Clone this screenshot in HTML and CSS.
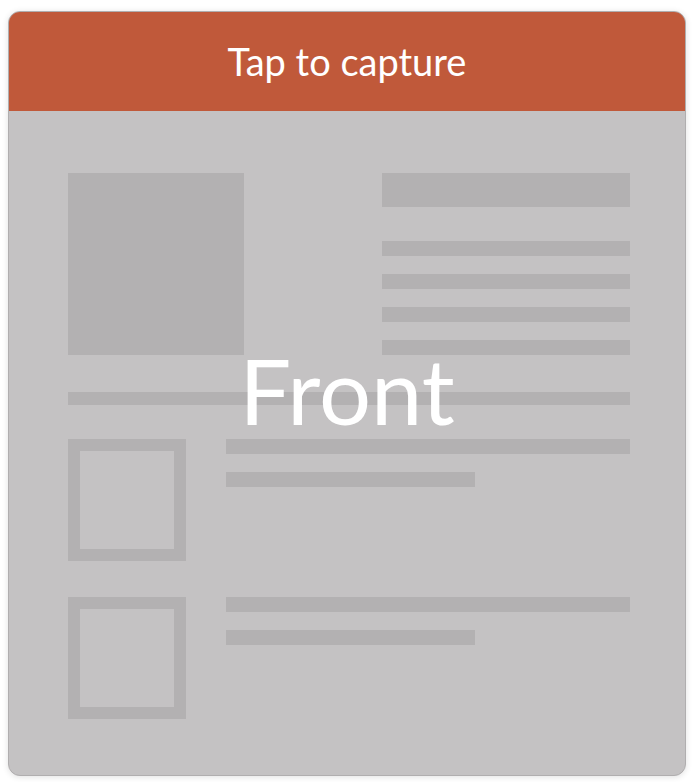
FILE: index.html
```html
<!DOCTYPE html>
<html lang="en">
<head>
    <meta charset="UTF-8">
    <meta name="viewport" content="width=device-width, initial-scale=1.0">
    <title>Capture</title>
    <link rel="stylesheet" href="styles.css">
</head>
<body>
    <div class="card">
        <div class="card-header">Tap to capture</div>

        <div class="card-body">
            <div class="doc">
                <div class="doc-top">
                    <div class="photo"></div>
                    <div class="doc-text">
                        <div class="line heading"></div>
                        <div class="line"></div>
                        <div class="line"></div>
                        <div class="line"></div>
                        <div class="line"></div>
                    </div>
                </div>

                <div class="line rule"></div>

                <div class="doc-row">
                    <div class="thumb"></div>
                    <div class="row-text">
                        <div class="line"></div>
                        <div class="line short"></div>
                    </div>
                </div>

                <div class="doc-row">
                    <div class="thumb"></div>
                    <div class="row-text">
                        <div class="line"></div>
                        <div class="line short"></div>
                    </div>
                </div>
            </div>

            <div class="side-label">Front</div>
        </div>
    </div>
</body>
</html>
```

FILE: styles.css
```css
* {
    box-sizing: border-box;
    margin: 0;
    padding: 0;
}

body {
    font-family: Lato, 'Noto Sans', sans-serif;
    background-color: #ffffff;
    padding: 11px 8px 6px 8px;
}

.card {
    height: 765px;
    display: flex;
    flex-direction: column;
    border-radius: 12px;
    overflow: hidden;
    background-color: #c4c2c3;
    border: 1px solid #b0aeaf;
    box-shadow: 0 1px 6px rgba(0,0,0,0.12);
}

.card-header {
    height: 100px;
    margin: -1px -1px 0 -1px;
    background-color: #c0593a;
    color: #ffffff;
    font-size: 38px;
    text-align: center;
    line-height: 100px;
}

.card-body {
    position: relative;
    flex: 1;
    padding: 62px 55px 0 59px;
}

.line {
    height: 15px;
    background-color: #b3b1b2;
}

.doc-top {
    display: flex;
    justify-content: space-between;
}

.photo {
    width: 176px;
    height: 182px;
    background-color: #b3b1b2;
}

.doc-text {
    width: 248px;
    display: flex;
    flex-direction: column;
    gap: 18px;
}

.doc-text .heading {
    height: 34px;
    margin-bottom: 16px;
}

.rule {
    height: 13px;
    margin-top: 37px;
}

.doc-row {
    display: flex;
    gap: 40px;
    margin-top: 34px;
}

.doc-row + .doc-row {
    margin-top: 36px;
}

.thumb {
    width: 118px;
    height: 122px;
    border: 12px solid #b3b1b2;
}

.row-text {
    flex: 1;
    display: flex;
    flex-direction: column;
    gap: 18px;
}

.row-text .short {
    width: 249px;
}

.side-label {
    position: absolute;
    left: 0;
    right: 0;
    top: 233px;
    text-align: center;
    color: #ffffff;
    font-size: 92px;
    line-height: 1;
}
```
